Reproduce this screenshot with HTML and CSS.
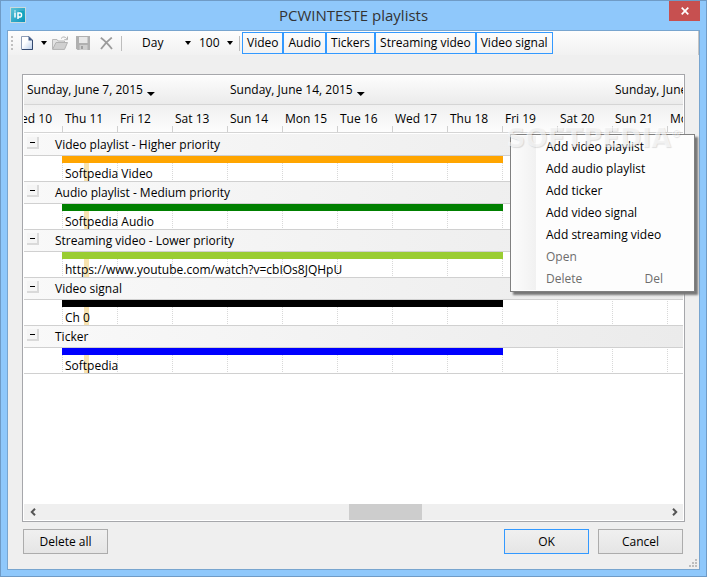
FILE: index.html
```html
<!DOCTYPE html>
<html lang="en">
<head>
<meta charset="utf-8">
<meta name="viewport" content="width=device-width, initial-scale=1">
<title>PCWINTESTE playlists</title>
<link rel="stylesheet" href="styles.css">
</head>
<body>
<div class="window">
  <header class="titlebar">
    <svg class="app-icon" viewBox="0 0 16 16" aria-hidden="true">
      <defs><linearGradient id="app" x1="0" y1="0" x2="1" y2="1"><stop offset="0" stop-color="#5cc3d6"/><stop offset="1" stop-color="#0a93bd"/></linearGradient></defs>
      <rect width="16" height="16" fill="#c9d9dc"/>
      <rect x="1" y="1" width="14" height="14" fill="url(#app)"/>
      <path d="M9 4h5v8h-3z" fill="#14a5bd"/>
      <path d="M5 5.5v5M5 3.6v1M8 12V6h2.2q1.3 0 1.3 2t-1.3 2H8" fill="none" stroke="#fff" stroke-width="1.5"/>
    </svg>
    <h1 class="title">PCWINTESTE playlists</h1>
    <button class="close" type="button" aria-label="Close">
      <svg viewBox="0 0 8 8" aria-hidden="true"><path d="M.7.7l6.6 6.6M7.3.7L.7 7.3" stroke="#fff" stroke-width="1.7"/></svg>
    </button>
  </header>

  <main class="client">
    <div class="toolbar" role="toolbar" aria-label="Playlist tools">
      <span class="grip"></span>
      <button class="tool new" type="button" aria-label="New">
        <svg width="12" height="14" viewBox="0 0 12 14" aria-hidden="true">
          <defs><linearGradient id="page" x1="0" y1="0" x2="1" y2="1"><stop offset=".4" stop-color="#fff"/><stop offset="1" stop-color="#b9cdea"/></linearGradient></defs>
          <path d="M.5.5H8L11.5 4v9.500H.5z" fill="url(#page)" stroke="#8d9cb5"/>
          <path d="M11.500 4v9.500H1" fill="none" stroke="#33496f"/>
          <path d="M7.500 0v4.500H12z" fill="#405a86"/>
        </svg>
        <span class="caret"></span>
      </button>
      <button class="tool open" type="button" aria-label="Open" disabled>
        <svg width="17" height="14" viewBox="0 0 17 14" aria-hidden="true">
          <path d="M.5 13V3.500H5l1 1.500h6.500v2" fill="#e3e3e3" stroke="#b8b8b8"/>
          <path d="M.6 13.400L4 6.500h11.500L12.500 13.400z" fill="#d0d0d0" stroke="#b2b2b2"/>
          <path d="M9 2.500Q12-.8 14.800 2.700M15.500.5v3.200h-3.200" fill="none" stroke="#b2b2b2"/>
        </svg>
      </button>
      <button class="tool save" type="button" aria-label="Save" disabled>
        <svg width="14" height="14" viewBox="0 0 14 14" aria-hidden="true">
          <path d="M0 0h14v14H1.500L0 12.500z" fill="#b0b0b0"/>
          <path d="M3 1h8.500v6H3z" fill="#e8e8e8"/>
          <path d="M3.500 9h8v5h-8z" fill="#cecece"/><path d="M5 10h2v3H5z" fill="#a0a0a0"/>
        </svg>
      </button>
      <button class="tool delete" type="button" aria-label="Delete" disabled>
        <svg width="13" height="13" viewBox="0 0 13 13" aria-hidden="true"><path d="M.8.8Q6 4.500 12 12M11.800.6Q6 5 1 12" fill="none" stroke="#9c9c9c" stroke-width="1.800"/></svg>
      </button>
      <span class="separator"></span>
      <span class="picker scale"><select aria-label="Scale"><option>Day</option></select><span class="caret"></span></span>
      <span class="picker zoom"><select aria-label="Zoom"><option>100</option></select><span class="caret"></span></span>
      <span class="separator"></span>
      <div class="filters">
        <button type="button" aria-pressed="true">Video</button>
        <button type="button" aria-pressed="true">Audio</button>
        <button type="button" aria-pressed="true">Tickers</button>
        <button type="button" aria-pressed="true">Streaming video</button>
        <button type="button" aria-pressed="true">Video signal</button>
      </div>
    </div>

    <div class="stage">
      <section class="timeline" aria-label="Timeline">
        <div class="weeks">
          <button type="button">Sunday, June 7, 2015<span class="arrow"></span></button>
          <button type="button">Sunday, June 14, 2015<span class="arrow"></span></button>
          <button type="button">Sunday, June 21, 2015<span class="arrow"></span></button>
        </div>
        <div class="days">
          <span>Wed 10</span><span>Thu 11</span><span>Fri 12</span><span>Sat 13</span><span>Sun 14</span><span>Mon 15</span><span>Tue 16</span><span>Wed 17</span><span>Thu 18</span><span>Fri 19</span><span>Sat 20</span><span>Sun 21</span><span>Mon 22</span>
        </div>
        <div class="groups">
          <div class="group"><h2><button class="toggle" type="button" aria-label="Collapse"></button>Video playlist - Higher priority</h2><div class="track"><div class="bar orange"></div><p>Softpedia Video</p></div></div>
          <div class="group"><h2><button class="toggle" type="button" aria-label="Collapse"></button>Audio playlist - Medium priority</h2><div class="track"><div class="bar green"></div><p>Softpedia Audio</p></div></div>
          <div class="group"><h2><button class="toggle" type="button" aria-label="Collapse"></button>Streaming video - Lower priority</h2><div class="track"><div class="bar lime"></div><p>https://www.youtube.com/watch?v=cbIOs8JQHpU</p></div></div>
          <div class="group"><h2><button class="toggle" type="button" aria-label="Collapse"></button>Video signal</h2><div class="track"><div class="bar black"></div><p>Ch 0</p></div></div>
          <div class="group"><h2><button class="toggle" type="button" aria-label="Collapse"></button>Ticker</h2><div class="track"><div class="bar blue"></div><p>Softpedia</p></div></div>
        </div>
        <div class="scrollbar">
          <button type="button" aria-label="Scroll left"><svg width="6" height="8" viewBox="0 0 6 8" aria-hidden="true"><path d="M5 .8L1.800 4 5 7.200" fill="none" stroke="#555" stroke-width="2"/></svg></button>
          <span class="thumb"></span>
          <button class="forward" type="button" aria-label="Scroll right"><svg width="6" height="8" viewBox="0 0 6 8" aria-hidden="true"><path d="M1 .8L4.200 4 1 7.200" fill="none" stroke="#555" stroke-width="2"/></svg></button>
        </div>
      </section>

      <div class="menu" role="menu">
        <button type="button" role="menuitem">Add video playlist</button>
        <button type="button" role="menuitem">Add audio playlist</button>
        <button type="button" role="menuitem">Add ticker</button>
        <button type="button" role="menuitem">Add video signal</button>
        <button type="button" role="menuitem">Add streaming video</button>
        <button type="button" role="menuitem" disabled>Open</button>
        <button type="button" role="menuitem" disabled>Delete<kbd>Del</kbd></button>
      </div>
      <div class="watermark">SOFTPEDIA<sup>®</sup></div>
    </div>

    <footer class="actions">
      <button type="button">Delete all</button>
      <span class="spacer"></span>
      <button class="default" type="button">OK</button>
      <button type="button">Cancel</button>
    </footer>
    <svg class="resize" width="9" height="9" viewBox="0 0 9 9" aria-hidden="true"><path d="M6 0h2v2H6zM3 3h2v2H3zM6 3h2v2H6zM0 6h2v2H0zM3 6h2v2H3zM6 6h2v2H6z" fill="#bdbdbd"/></svg>
  </main>
</div>
</body>
</html>
```

FILE: styles.css
```css
* { box-sizing: border-box; }

body {
  margin: 0;
  font: 12px/16px "Open Sans", "Noto Sans", sans-serif;
  color: #000;
}

button, select {
  margin: 0;
  padding: 0;
  border: 0;
  background: none;
  color: inherit;
  font: inherit;
}

h1, h2, p { margin: 0; font-weight: 400; }

.window {
  display: flex;
  flex-direction: column;
  min-height: 100vh;
  padding: 0 6px 6px;
  border: 1px solid #6f9bc6;
  background: #8fc8fb;
}

.titlebar {
  display: grid;
  grid-template-columns: 31px 1fr 31px;
  height: 29px;
}

.app-icon { width: 16px; height: 16px; margin: 6px 0 0 3px; }

.title {
  color: #333;
  font-size: 15px;
  line-height: 29px;
  text-align: center;
}

.close {
  display: grid;
  place-items: center;
  height: 20px;
  background: #c75050;
}
.close svg { width: 8px; height: 8px; }

.client {
  position: relative;
  display: flex;
  flex: 1;
  flex-direction: column;
  border: 1px solid #78a5cf;
  background: #efefef;
}

/* Toolbar */
.toolbar {
  display: flex;
  align-items: center;
  height: 24px;
  border-right: 1px solid #c4c4c4;
  background: linear-gradient(#fdfdfd, #f1f1f1);
}

.grip {
  width: 2px;
  height: 14px;
  margin: 0 8px 0 3px;
  background: repeating-linear-gradient(#c0c0c0 0 2px, transparent 2px 4px);
}

.tool { display: flex; align-items: center; }
.tool svg { display: block; }
.new { gap: 8px; margin-right: 5px; }
.open { margin-right: 7px; }
.save { margin-right: 10px; }
.delete { margin-right: 8px; }

.caret {
  width: 6px;
  height: 4px;
  background: #000;
  clip-path: polygon(0 0, 100% 0, 50% 100%);
}

.separator { width: 1px; height: 15px; background: #bdbdbd; }

.picker { display: flex; align-items: center; }
.picker select { appearance: none; outline: 0; }
.scale { margin-left: 20px; }
.scale select { width: 43px; }
.zoom { margin: 0 6px 0 8px; }
.zoom select { width: 28px; }

.filters { display: flex; margin-left: 2px; }
.filters button {
  height: 22px;
  padding: 0 4px;
  border: 1px solid #3399ff;
}

/* Timeline */
.stage {
  position: relative;
  display: flex;
  flex: 1;
  margin: 19px 14px 0;
}

.timeline {
  display: flex;
  flex: 1;
  flex-direction: column;
  min-width: 0;
  padding: 1px;
  border: 1px solid #a6a7ab;
  background: #fff;
}

.weeks {
  display: grid;
  grid-template-columns: 203px 385px 1fr;
  height: 29px;
  overflow: hidden;
  border-bottom: 1px solid #d5d5d5;
  background: linear-gradient(#fdfdfd, #ebebeb);
}
.weeks button {
  display: flex;
  align-items: center;
  gap: 4px;
  min-width: 0;
  padding-left: 3px;
  white-space: nowrap;
}
.arrow {
  flex: none;
  width: 8px;
  height: 4px;
  margin-top: 8px;
  background: #000;
  clip-path: polygon(0 0, 100% 0, 50% 100%);
}

.days {
  display: flex;
  height: 28px;
  padding-top: 6px;
  overflow: hidden;
  border-bottom: 1px solid #d5d5d5;
  background:
    repeating-linear-gradient(90deg, #d0d0d0 0 1px, transparent 1px 55px) 38px 100% / 100% 6px no-repeat,
    linear-gradient(#f0f0f0, #fdfdfd);
}
.days span { flex: 0 0 55px; padding-left: 3px; white-space: nowrap; }
.days span:first-child { margin-left: -17px; }

.groups { flex: 1; padding-top: 1px; }

.group h2 {
  display: flex;
  align-items: center;
  height: 22px;
  border-bottom: 1px solid #d0d0d0;
  background: linear-gradient(90deg, #f9f9f9, #ebebeb);
  font-size: 12px;
}

.toggle {
  width: 12px;
  height: 12px;
  margin: 0 16px 4px 3px;
  border: solid;
  border-width: 0 2px 2px 0;
  border-color: #dadada;
  background: linear-gradient(#000, #000) 3px 5px / 5px 1px no-repeat #f5f5f5;
}

.track {
  height: 26px;
  border-bottom: 1px solid #d0d0d0;
  background:
    linear-gradient(#f8e3b0, #f8e3b0) 60px 0 / 5px 100% no-repeat,
    repeating-linear-gradient(#fff 0 1px, transparent 1px 2px),
    repeating-linear-gradient(90deg, #d8d8d8 0 1px, transparent 1px 55px) 38px 0 / 100% 100% no-repeat;
}
.track p { padding-left: 41px; line-height: 22px; height: 18px; }

.bar { width: 441px; height: 7px; margin-left: 38px; }
.orange { background: #ffa500; }
.green { background: #008000; }
.lime { background: #9acd32; }
.black { background: #000; }
.blue { background: #0000ff; }

.scrollbar {
  display: grid;
  grid-template-columns: 17px 308fr 73fr 244fr 17px;
  height: 16px;
  background: #efefef;
}
.scrollbar button { display: grid; place-items: center; }
.thumb { grid-column: 3; background: #cdcdcd; }
.forward { grid-column: 5; }

/* Context menu over the timeline */
.menu {
  position: absolute;
  top: 60px;
  right: -10px;
  width: 185px;
  padding: 1px;
  border: 1px solid #808080;
  background: linear-gradient(90deg, #fcfcfc, #f1f1f1) 1px 1px / 24px 154px no-repeat #fdfdfd;
  box-shadow: 3px 3px 2px #777;
}
.menu button {
  display: flex;
  width: 100%;
  height: 22px;
  align-items: center;
  padding: 0 30px 0 34px;
}
.menu button:disabled { color: #6d6d6d; }
.menu kbd { margin-left: auto; font: inherit; }

.watermark {
  position: absolute;
  top: 49px;
  right: 4px;
  color: rgba(255, 255, 255, .6);
  font: 700 26px/30px "DejaVu Sans", sans-serif;
  text-shadow: 1px 1px 1px rgba(0, 0, 0, .12);
  pointer-events: none;
}
.watermark sup { font-size: 10px; line-height: 0; }

/* Dialog buttons */
.actions {
  display: flex;
  gap: 9px;
  padding: 7px 16px 15px 15px;
}
.actions button {
  width: 85px;
  height: 25px;
  border: 1px solid #acacac;
  background: linear-gradient(#f0f0f0, #e5e5e5);
}
.actions .default { border-color: #3399ff; }
.spacer { flex: 1; }

.resize { position: absolute; right: 1px; bottom: 1px; }
```
